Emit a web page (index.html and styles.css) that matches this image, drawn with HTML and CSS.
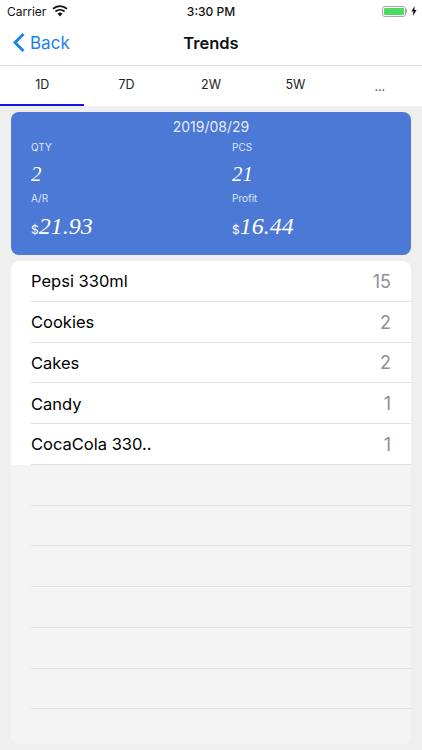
FILE: index.html
```html
<!DOCTYPE html>
<html lang="en">
<head>
  <meta charset="UTF-8">
  <meta name="viewport" content="width=device-width, initial-scale=1.0">
  <title>Trends</title>
  <link rel="stylesheet" href="styles.css">
</head>
<body>
  <div class="status-bar">
    <div class="status-left">
      <span>Carrier</span>
      <svg class="wifi" width="16" height="12" viewBox="0 0 16 12">
        <path d="M8 11.5 5.6 8.8a3.4 3.4 0 0 1 4.8 0Z" fill="#111"/>
        <path d="M3.4 6.6a6.6 6.6 0 0 1 9.2 0" fill="none" stroke="#111" stroke-width="1.7"/>
        <path d="M1 3.9a10 10 0 0 1 14 0" fill="none" stroke="#111" stroke-width="1.7"/>
      </svg>
    </div>
    <div class="status-time">3:30 PM</div>
    <div class="status-right">
      <div class="battery"><div class="battery-level"></div></div>
      <div class="battery-tip"></div>
      <svg width="6" height="10" viewBox="0 0 6 10">
        <path d="M3.6 0 0.4 5.6h2L1.9 10 5.6 4H3.4Z" fill="#111"/>
      </svg>
    </div>
  </div>

  <div class="nav-bar">
    <div class="back">
      <svg width="14" height="21" viewBox="0 0 14 21">
        <path d="M11.5 2 3 10.5 11.5 19" fill="none" stroke="#1a82ec" stroke-width="2.9"/>
      </svg>
      <span>Back</span>
    </div>
    <div class="nav-title">Trends</div>
  </div>

  <div class="tabs">
    <div class="tab active">1D</div>
    <div class="tab">7D</div>
    <div class="tab">2W</div>
    <div class="tab">5W</div>
    <div class="tab more">...</div>
  </div>

  <div class="content">
    <div class="summary">
      <div class="summary-date">2019/08/29</div>
      <div class="summary-grid">
        <div class="stat">
          <div class="stat-label">QTY</div>
          <div class="stat-value">2</div>
        </div>
        <div class="stat">
          <div class="stat-label">PCS</div>
          <div class="stat-value">21</div>
        </div>
        <div class="stat">
          <div class="stat-label">A/R</div>
          <div class="stat-value large"><span class="currency">$</span>21.93</div>
        </div>
        <div class="stat">
          <div class="stat-label">Profit</div>
          <div class="stat-value large"><span class="currency">$</span>16.44</div>
        </div>
      </div>
    </div>

    <div class="list">
      <div class="rows">
        <div class="row"><span>Pepsi 330ml</span><span class="count">15</span></div>
        <div class="row"><span>Cookies</span><span class="count">2</span></div>
        <div class="row"><span>Cakes</span><span class="count">2</span></div>
        <div class="row"><span>Candy</span><span class="count">1</span></div>
        <div class="row"><span>CocaCola 330..</span><span class="count">1</span></div>
      </div>
      <div class="row empty"></div>
      <div class="row empty"></div>
      <div class="row empty"></div>
      <div class="row empty"></div>
      <div class="row empty"></div>
      <div class="row empty"></div>
    </div>
  </div>
</body>
</html>
```

FILE: styles.css
```css
* {
  box-sizing: border-box;
}
html, body {
  margin: 0;
  height: 100%;
}
body {
  width: 422px;
  height: 750px;
  overflow: hidden;
  background: #efefef;
  font-family: Inter, Roboto, "Liberation Sans", sans-serif;
  color: #111;
}
.status-bar {
  height: 21px;
  background: #fff;
  display: flex;
  align-items: center;
  justify-content: space-between;
  padding: 1px 5px 0 7px;
  font-size: 12px;
  position: relative;
}
.status-left {
  display: flex;
  align-items: center;
  gap: 6px;
}
.status-time {
  position: absolute;
  left: 0;
  right: 0;
  text-align: center;
  font-weight: 500;
}
.status-right {
  display: flex;
  align-items: center;
}
.battery {
  width: 24px;
  height: 11px;
  border: 1px solid #a9a9a9;
  border-radius: 3px;
  padding: 1px;
}
.battery-level {
  height: 100%;
  background: #4cd964;
  border-radius: 1px;
}
.battery-tip {
  width: 1.5px;
  height: 4px;
  background: #a9a9a9;
  margin-right: 4px;
}
.nav-bar {
  height: 45px;
  background: #fff;
  border-bottom: 1px solid #dcdcdc;
  display: flex;
  align-items: center;
  justify-content: center;
  position: relative;
}
.back {
  position: absolute;
  left: 12px;
  top: 11px;
  display: flex;
  align-items: center;
  gap: 4px;
  color: #1a82ec;
  font-size: 17px;
}
.nav-title {
  font-size: 16.5px;
  font-weight: 600;
}
.tabs {
  height: 40px;
  background: #fff;
  display: flex;
}
.tab {
  flex: 1;
  display: flex;
  align-items: center;
  justify-content: center;
  padding-bottom: 3px;
  font-size: 12.5px;
  color: #222;
}
.tab.active {
  border-bottom: 2px solid #1414e6;
  padding-bottom: 1px;
}
.tab.more {
  color: #555;
  padding-bottom: 0;
}
.content {
  padding: 6px 11px 0;
}
.summary {
  height: 143px;
  background: #4c78d6;
  border-radius: 8px;
  color: #fff;
  padding: 7px 20px 0;
}
.summary-date {
  text-align: center;
  font-size: 14px;
  line-height: 16px;
  color: #e6ecfa;
}
.summary-grid {
  display: grid;
  grid-template-columns: 201px 1fr;
  margin-top: 6px;
}
.stat-label {
  font-size: 10px;
  line-height: 12px;
  color: #dfe7f8;
}
.stat-value {
  font-family: "Liberation Serif", serif;
  font-style: italic;
  font-size: 21px;
  line-height: 24px;
  margin-top: 9px;
  height: 30px;
}
.stat-value.large {
  font-size: 24px;
  line-height: 30px;
  margin-top: 7px;
  height: 32px;
}
.currency {
  font-family: Inter, Roboto, "Liberation Sans", sans-serif;
  font-style: normal;
  font-size: 12px;
}
.list {
  margin-top: 6px;
  height: 483px;
  background: #f4f4f4;
  border-radius: 8px;
  overflow: hidden;
}
.rows {
  background: #fff;
}
.row {
  height: 40.75px;
  margin-left: 20px;
  border-bottom: 1px solid #e2e2e2;
  display: flex;
  align-items: center;
  justify-content: space-between;
  padding: 1px 20px 0 0;
  font-size: 16.5px;
  color: #000;
}
.count {
  color: #8e8e93;
  font-size: 18px;
}
```
